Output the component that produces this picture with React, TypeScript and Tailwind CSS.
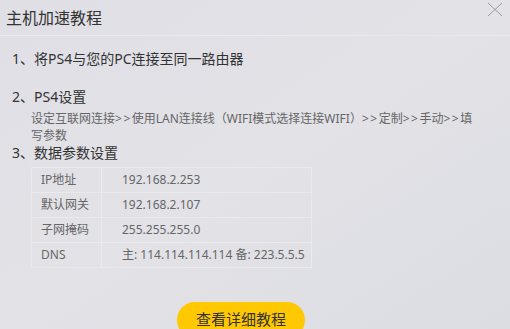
const rows = [
  { label: 'IP地址', value: '192.168.2.253' },
  { label: '默认网关', value: '192.168.2.107' },
  { label: '子网掩码', value: '255.255.255.0' },
  { label: 'DNS', value: '主: 114.114.114.114 备: 223.5.5.5' },
];

function Arrow() {
  return <span className="tracking-[1.5px]">&gt;&gt;</span>;
}

export default function App() {
  return (
    <div
      className="w-[510px] h-[329px] overflow-hidden bg-gradient-to-br from-[#dfdfe5] via-[#e2e2e7] to-[#dcdde2] text-[#333] relative"
      style={{ fontFamily: '"Noto Sans", "Noto Sans CJK SC", sans-serif' }}
    >
      <header className="h-[36px] border-b border-[#eaeaee] flex items-center pl-[6px]">
        <h1 className="text-[16px] leading-[20px] text-[#333]">主机加速教程</h1>
      </header>
      <button className="absolute right-[7px] top-[1px] w-[16px] h-[16px] flex items-center justify-center">
        <svg width="16" height="15" viewBox="0 0 16 15" fill="none" stroke="#9a9a9e" strokeWidth="1">
          <path d="M1 1L15 14M15 1L1 14" />
        </svg>
      </button>

      <main className="pl-[12px]">
        <p className="mt-[13px] text-[14px] leading-[20px]">1、将PS4与您的PC连接至同一路由器</p>
        <p className="mt-[18px] text-[14px] leading-[20px]">2、PS4设置</p>
        <p className="mt-[3px] ml-[19px] w-[475px] whitespace-nowrap text-[12px] leading-[17px] text-[#666]">
          设定互联网连接<Arrow />使用LAN连接线（WIFI模式选择连接WIFI）<Arrow />定制<Arrow />手动<Arrow />填
          <br />
          写参数
        </p>
        <p className="text-[14px] leading-[18px]">3、数据参数设置</p>

        <table className="mt-[5px] ml-[19px] border-collapse text-[12px] text-[#666]">
          <tbody>
            {rows.map((r) => (
              <tr key={r.label} className="h-[25px]">
                <td className="w-[70px] border border-[#eaeaee] pl-[9px] p-0 whitespace-nowrap">{r.label}</td>
                <td className="w-[210px] border border-[#eaeaee] pl-[20px] p-0 whitespace-nowrap">{r.value}</td>
              </tr>
            ))}
          </tbody>
        </table>
      </main>

      <div className="mt-[34px] flex">
        <button className="ml-[177px] w-[128px] h-[36px] rounded-full bg-[#ffc800] text-[15px] text-[#333] flex items-center justify-center pb-[1px]">
          查看详细教程
        </button>
      </div>
    </div>
  );
}
